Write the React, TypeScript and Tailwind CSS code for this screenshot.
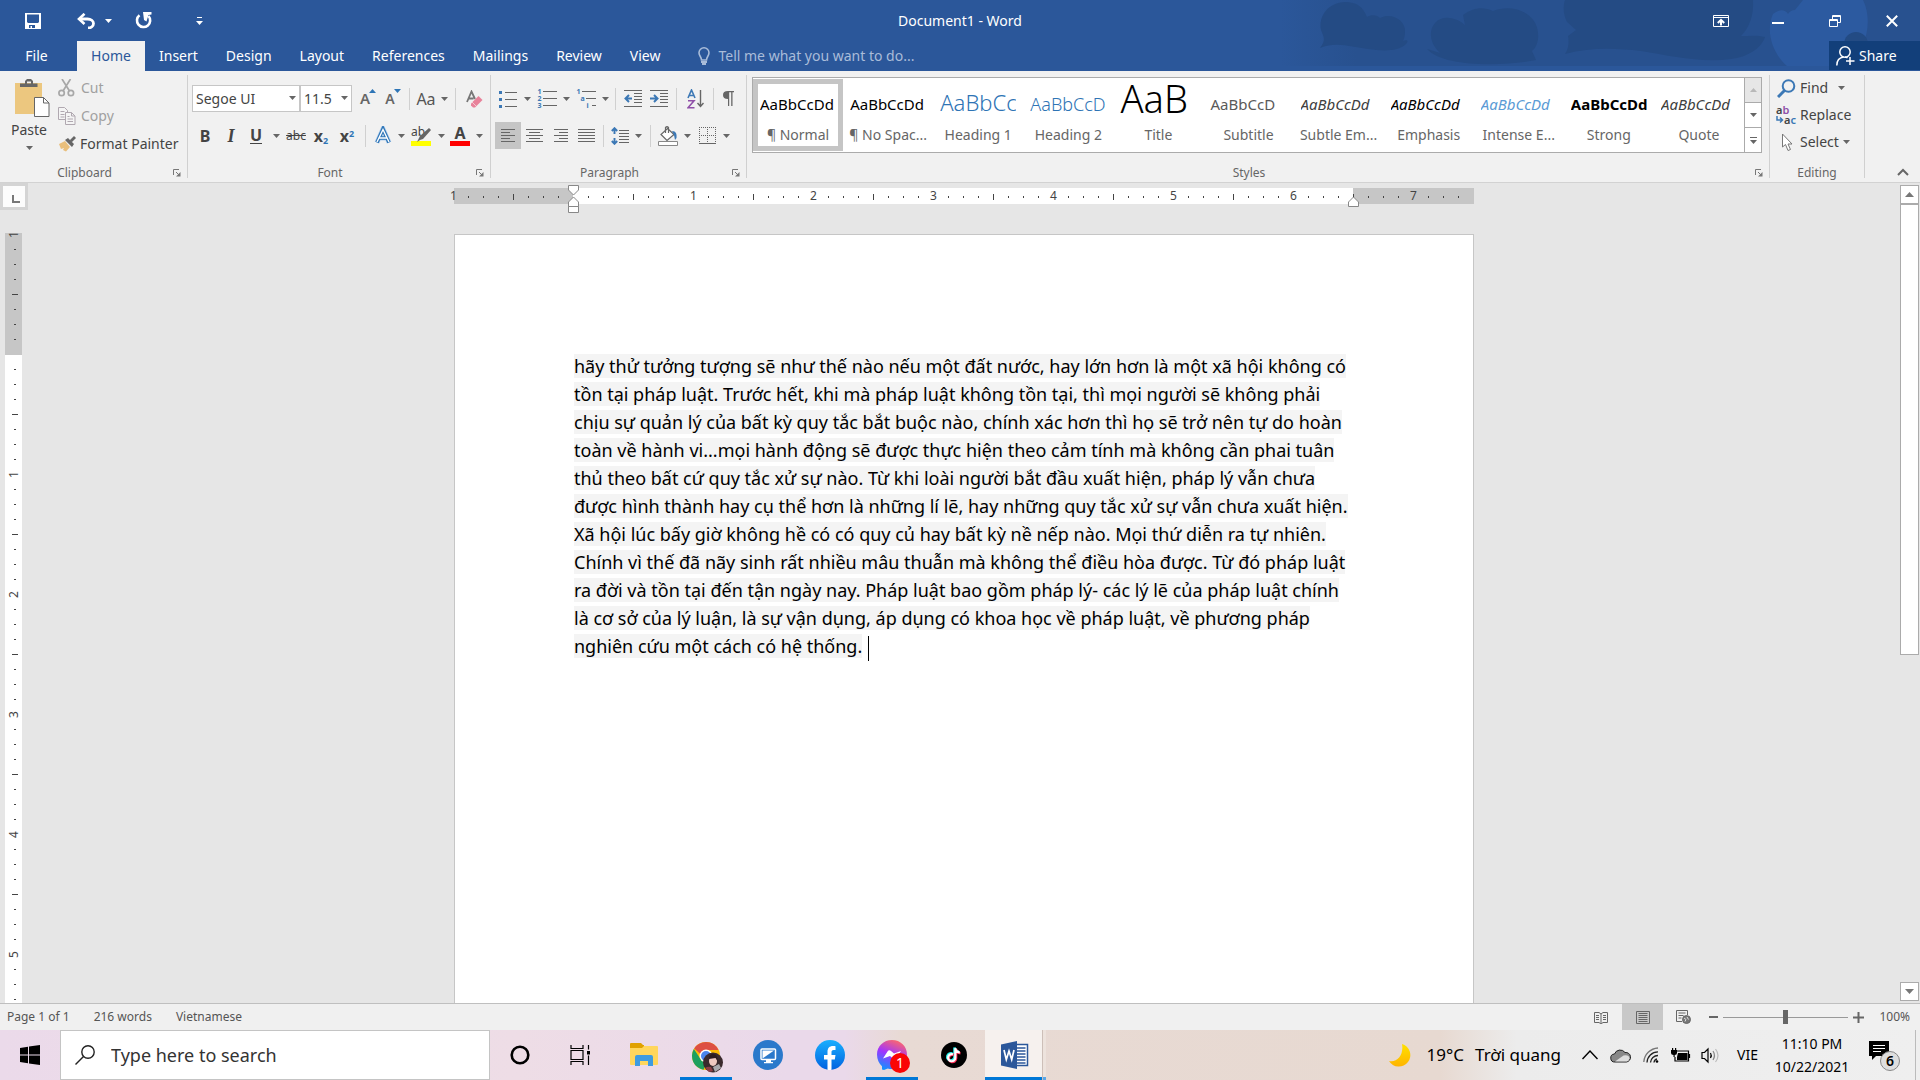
import type { ReactNode } from "react";

const LINES = [
  "hãy thử tưởng tượng sẽ như thế nào nếu một đất nước, hay lớn hơn là một xã hội không có",
  "tồn tại pháp luật. Trước hết, khi mà pháp luật không tồn tại, thì mọi người sẽ không phải",
  "chịu sự quản lý của bất kỳ quy tắc bắt buộc nào, chính xác hơn thì họ sẽ trở nên tự do hoàn",
  "toàn về hành vi...mọi hành động sẽ được thực hiện theo cảm tính mà không cần phai tuân",
  "thủ theo bất cứ quy tắc xử sự nào. Từ khi loài người bắt đầu xuất hiện, pháp lý vẫn chưa",
  "được hình thành hay cụ thể hơn là những lí lẽ, hay những quy tắc xử sự vẫn chưa xuất hiện.",
  "Xã hội lúc bấy giờ không hề có có quy củ hay bất kỳ nề nếp nào. Mọi thứ diễn ra tự nhiên.",
  "Chính vì thế đã nãy sinh rất nhiều mâu thuẫn mà không thể điều hòa được. Từ đó pháp luật",
  "ra đời và tồn tại đến tận ngày nay. Pháp luật bao gồm pháp lý- các lý lẽ của pháp luật chính",
  "là cơ sở của lý luận, là sự vận dụng, áp dụng có khoa học về pháp luật, về phương pháp",
  "nghiên cứu một cách có hệ thống.",
];

const STYLES = [
  { name: "¶ Normal", sample: "AaBbCcDd", cls: "text-[15px] leading-[22px] text-black" },
  { name: "¶ No Spac...", sample: "AaBbCcDd", cls: "text-[15px] leading-[22px] text-black" },
  { name: "Heading 1", sample: "AaBbCc", cls: "text-[22px] leading-[26px] font-light text-[#2e74b5]" },
  { name: "Heading 2", sample: "AaBbCcD", cls: "text-[18px] leading-[22px] font-light text-[#2e74b5]" },
  { name: "Title", sample: "AaB", cls: "text-[38px] leading-[34px] font-light text-black" },
  { name: "Subtitle", sample: "AaBbCcD", cls: "text-[15px] leading-[22px] text-[#5a5a5a]" },
  { name: "Subtle Em...", sample: "AaBbCcDd", cls: "text-[15px] leading-[22px] italic text-[#404040]" },
  { name: "Emphasis", sample: "AaBbCcDd", cls: "text-[15px] leading-[22px] italic text-black" },
  { name: "Intense E...", sample: "AaBbCcDd", cls: "text-[15px] leading-[22px] italic text-[#5b9bd5]" },
  { name: "Strong", sample: "AaBbCcDd", cls: "text-[15px] leading-[22px] font-bold text-black" },
  { name: "Quote", sample: "AaBbCcDd", cls: "text-[15px] leading-[22px] italic text-[#404040]" },
];

const TABS = ["Insert", "Design", "Layout", "References", "Mailings", "Review", "View"];

function Tri({ className = "" }: { className?: string }) {
  return (
    <svg width="7" height="4" viewBox="0 0 7 4" className={className} aria-hidden="true">
      <path d="M0 0h7L3.5 4z" fill="currentColor" />
    </svg>
  );
}

function Btn({ w, label, children, className = "" }: { w: string; label: string; children: ReactNode; className?: string }) {
  return (
    <button type="button" aria-label={label} className={`flex h-[27px] shrink-0 items-center justify-center ${w} ${className}`}>
      {children}
    </button>
  );
}

function Drop({ w, label }: { w: string; label: string }) {
  return (
    <Btn w={w} label={label} className="text-[#666]">
      <Tri />
    </Btn>
  );
}

function Sep({ w }: { w: string }) {
  return (
    <div className={`flex shrink-0 justify-center ${w}`}>
      <div className="h-[22px] w-px bg-[#d0d0d0]" />
    </div>
  );
}

function Launcher() {
  return (
    <button type="button" aria-label="Open dialog" className="flex h-4 w-4 items-center justify-center">
      <svg width="8" height="8" viewBox="0 0 8 8" aria-hidden="true">
        <path d="M.5 6V.5H6M3 3l3 3" fill="none" stroke="#777" />
        <path d="M7.5 3v4.500H3z" fill="#777" />
      </svg>
    </button>
  );
}

function Group({ label, width, launcher = true, children }: { label: string; width: string; launcher?: boolean; children: ReactNode }) {
  return (
    <section aria-label={label} className={`flex flex-col py-1 ${width}`}>
      <div className="flex flex-1 flex-col border-r border-[#d0d0d0]">
        <div className="flex-1">{children}</div>
        <div className="flex h-[13px] items-start">
          <div className="flex-1 text-center text-xs text-[#666]">{label}</div>
          {launcher && <div className="w-[18px]"><Launcher /></div>}
        </div>
      </div>
    </section>
  );
}

function TitleArt() {
  return (
    <svg className="pointer-events-none absolute right-0 top-0" width="640" height="66" viewBox="1280 0 640 66" aria-hidden="true">
      <defs>
        <linearGradient id="fade" x1="0" x2="1">
          <stop offset="0" stopColor="#28518f" stopOpacity="0" />
          <stop offset=".12" stopColor="#28518f" />
          <stop offset="1" stopColor="#28518f" />
        </linearGradient>
      </defs>
      <path fill="url(#fade)" d="M1280 0h640v66h-640z" />
      <g fill="#244b84">
        <path d="M1320 48c6-8 4-10 1-18-3-14 8-28 24-28 12 0 18 5 22 15 4-3 11-2 13 1 11-6 26 2 25 14 0 4-1 7-2 9 4-2 6 0 3 3-8 8-24 7-38 5-16-2-32-8-48-1z" />
        <path d="M1427 49c5 1 9 3 13 4-10-9-12-22-5-30 8-9 22-5 30 2l-2-10c12-8 20-8 30-4 20-8 44 2 45 22 1 10-3 16-6 18l4 9c-30 6-92 8-109-11z" />
        <path d="M1565 54c4-6 4-12 3-18l8-6-9-8c-4-8-4-16-2-22h188c1 16-4 28-12 36 8 0 16-1 24 1-4 12-18 20-34 22-30 4-60-3-90-8-26-3-50-4-76 3z" />
      </g>
      <path fill="#2c5aa0" d="M1773 14c6-5 12-5 15 0 2-3 4-4 7-4l8-10h60c10 20 4 50-16 66h-60c-14-12-22-34-14-52z" />
      <circle cx="1856" cy="44" r="12" fill="#234b84" />
    </svg>
  );
}

function TitleBar() {
  return (
    <div className="relative grid h-[41px] grid-cols-[1fr_auto_1fr] items-center text-white">
      <div className="flex items-center pl-[25px]">
        <button type="button" aria-label="Save">
          <svg width="16" height="16" viewBox="0 0 16 16" aria-hidden="true">
            <path fillRule="evenodd" fill="#fff" d="M0 0h16v16H0zM2 1.500v7.500l1 1h10l1-1v-7.500zM4 12v3h1.500v-2H7v2h3v-3z" />
          </svg>
        </button>
        <button type="button" aria-label="Undo" className="ml-9">
          <svg width="18" height="16" viewBox="0 0 18 16" fill="none" stroke="#fff" aria-hidden="true">
            <path strokeWidth="2.800" d="M2 6h8.500c3.500 0 6 2 6 4.500S14 15 11 15" />
            <path strokeWidth="2.600" d="M7.500.8 2 6l5.500 5" />
          </svg>
        </button>
        <button type="button" aria-label="Undo list" className="ml-[10px]"><Tri /></button>
        <button type="button" aria-label="Redo" className="ml-[23px]">
          <svg width="17" height="17" viewBox="0 0 17 17" fill="none" stroke="#fff" aria-hidden="true">
            <path strokeWidth="2.600" d="M4.500 3.200A6.600 6.600 0 1 0 13.500 4" />
            <path fill="#fff" stroke="none" d="M8 0h8.500v2.500l-3 .5-2 6.500L9 8z" />
          </svg>
        </button>
        <button type="button" aria-label="Customize toolbar" className="ml-11 flex flex-col items-center gap-[3px]">
          <span className="h-px w-[5px] bg-white" />
          <Tri />
        </button>
      </div>
      <h1 className="text-sm">Document1 - Word</h1>
      <div className="z-10 flex justify-end">
        <Btn w="w-[57px]" label="Ribbon display options">
          <svg width="16" height="12" viewBox="0 0 16 12" fill="none" stroke="#fff" aria-hidden="true">
            <path d="M.5.500h15v11H.5zM.5 2.500h15" />
            <path strokeWidth="2" d="M8 10.500V5.500M4.800 8 8 4.800 11.200 8" />
          </svg>
        </Btn>
        <Btn w="w-[57px]" label="Minimize"><span className="mt-1 h-0.5 w-3 bg-white" /></Btn>
        <Btn w="w-[57px]" label="Restore">
          <svg width="12" height="12" viewBox="0 0 12 12" fill="none" stroke="#fff" aria-hidden="true">
            <path d="M.5 4.500h8v7h-8zM.5 5.500h8M3.500 4.500v-4h8v7h-3M3.500 1.500h8" />
          </svg>
        </Btn>
        <Btn w="w-[57px]" label="Close">
          <svg width="12" height="12" viewBox="0 0 12 12" stroke="#fff" strokeWidth="2" aria-hidden="true">
            <path d="m.8.8 10.400 10.400M11.200.8.8 11.200" />
          </svg>
        </Btn>
      </div>
    </div>
  );
}

function TabBar() {
  return (
    <nav className="relative flex h-[30px] items-stretch text-sm text-white">
      <button type="button" className="w-[77px] pr-1">File</button>
      <button type="button" className="w-[68px] bg-[#f1f1f1] text-[#2b579a]">Home</button>
      {TABS.map((t) => (
        <button type="button" key={t} className="px-[14px]">{t}</button>
      ))}
      <label className="ml-6 flex items-center gap-2 text-[#a9bcd9]">
        <svg width="12" height="18" viewBox="0 0 12 18" fill="none" stroke="#a9bcd9" strokeWidth="1.600" aria-hidden="true">
          <path d="M3.500 13C3.500 10 1 9 1 5.800A5 5 0 0 1 11 5.800C11 9 8.500 10 8.500 13z" />
          <path strokeWidth="2" d="M3 15h6M4 17h4" />
        </svg>
        <input aria-label="Tell me what you want to do" placeholder="Tell me what you want to do..." className="w-[220px] bg-transparent outline-none placeholder:text-[#a9bcd9]" />
      </label>
      <button type="button" className="mb-px ml-auto flex w-[91px] items-center gap-1 bg-[#123f7a] pl-[7px]">
        <svg width="19" height="20" viewBox="0 0 19 20" fill="none" stroke="#fff" strokeWidth="1.500" aria-hidden="true">
          <circle cx="9" cy="6" r="5.200" />
          <path d="M.8 19.500c0-5 3-8 7-8.500M9 11c1 0 1.500.2 2.500.8M14 11v8M10 15h8.500" />
        </svg>
        Share
      </button>
    </nav>
  );
}

function ClipboardGroup() {
  return (
    <Group label="Clipboard" width="w-[188px]">
      <div className="flex pt-1">
        <button type="button" className="flex w-[58px] flex-col items-center text-sm leading-5 text-[#444]">
          <svg width="35" height="39" viewBox="0 0 35 39" className="mb-0.5 ml-1.5" aria-hidden="true">
            <path fill="#ecc77f" d="M0 4h27v31H0z" />
            <path fill="#666" d="M5 8V4.500h5V2l2-2h4l2 2v2.500h4.500V8zM12 2.500v2h4v-2z" fillRule="evenodd" />
            <path fill="#fff" stroke="#666" d="M19.500 18.500h9l5.500 5.500v13.500H19.500z" />
            <path fill="none" stroke="#666" d="M28.500 18.500V24H34" />
          </svg>
          Paste
          <Tri className="mt-1.5 text-[#666]" />
        </button>
        <div className="flex flex-col text-sm text-[#a0a0a0]">
          <button type="button" className="flex h-[18px] items-center gap-[6px]">
            <svg width="17" height="18" viewBox="0 0 17 18" fill="none" stroke="#a8a8a8" strokeWidth="1.700" aria-hidden="true">
              <path d="m4 0 7.500 12M12.500 0 5 12" />
              <circle cx="3.600" cy="14" r="2.700" /><circle cx="12.900" cy="14" r="2.700" />
            </svg>
            Cut
          </button>
          <button type="button" className="mt-2.5 flex h-[18px] items-center gap-[5px]">
            <svg width="18" height="18" viewBox="0 0 18 18" fill="#f4f4f4" stroke="#b0a8b0" aria-hidden="true">
              <path d="M.5.500h6l3 3v9h-9zM2.500 4.500h4M2.500 7.500h4M2.500 10h4" />
              <path d="M7.500 5.500h6l3.500 3.500v8.500H7.500zM13.500 5.500V9H17M9.500 9.500h2M9.500 12h5.500M9.500 14.500h5.500" />
            </svg>
            Copy
          </button>
          <button type="button" className="mt-2.5 flex h-[18px] items-center gap-[4px] text-[#444]">
            <svg width="18" height="16" viewBox="0 0 18 16" aria-hidden="true">
              <path fill="#e9bf7c" d="m1 8 6-3 5 6-4 4.500L5 14l1-2-3 1z" />
              <path fill="#666" d="m7 4 3-2 6 6-2 3zM12 4l4-4 2 2-4 4z" />
            </svg>
            Format Painter
          </button>
        </div>
      </div>
    </Group>
  );
}

function FontGroup() {
  return (
    <Group label="Font" width="w-[303px]">
      <div className="flex items-center pl-1 pt-2.5 text-[#555]">
        <div className="relative">
          <select aria-label="Font" className="h-[27px] w-[108px] appearance-none border border-[#c6c6c6] bg-white pl-[3px] text-sm text-[#444]">
            <option>Segoe UI</option>
          </select>
          <Tri className="pointer-events-none absolute right-1 top-[11px] text-[#666]" />
        </div>
        <div className="relative">
          <select aria-label="Font size" className="h-[27px] w-[52px] appearance-none border border-[#c6c6c6] bg-white pl-[3px] text-sm text-[#444]">
            <option>11.5</option>
          </select>
          <Tri className="pointer-events-none absolute right-1 top-[11px] text-[#666]" />
        </div>
        <Btn w="w-[26px]" label="Increase font size" className="ml-0.5">
          <span className="relative pr-1 text-[15px] font-semibold text-[#666]">A<Tri className="absolute -right-[2px] top-[2px] rotate-180 text-[#2e75b6]" /></span>
        </Btn>
        <Btn w="w-6" label="Decrease font size">
          <span className="relative pr-1 text-sm font-semibold text-[#666]">A<Tri className="absolute -right-[2px] top-0 text-[#2e75b6]" /></span>
        </Btn>
        <Sep w="w-2.5" />
        <Btn w="w-6" label="Change case"><span className="text-base">Aa</span></Btn>
        <Drop w="w-3" label="Case options" />
        <Sep w="w-2.5" />
        <Btn w="w-7" label="Clear formatting">
          <svg width="17" height="18" viewBox="0 0 17 18" aria-hidden="true">
            <path d="M1 12 5.500 1.500 9 9M2.500 8.500h5" fill="none" stroke="#777" strokeWidth="1.800" />
            <path fill="#e8829a" d="m12.500 6 4 4-7.500 7.500H7l-2-2v-2z" />
            <path stroke="#f6c6d0" d="m6 12 4 4" />
          </svg>
        </Btn>
      </div>
      <div className="flex items-center pl-1 pt-2.5 text-base text-[#444]">
        <Btn w="w-[26px]" label="Bold"><b>B</b></Btn>
        <Btn w="w-[26px]" label="Italic"><b className="font-['Liberation_Serif'] text-lg italic">I</b></Btn>
        <Btn w="w-6" label="Underline"><b className="border-b border-[#444] leading-4">U</b></Btn>
        <Drop w="w-4" label="Underline options" />
        <Btn w="w-6" label="Strikethrough"><span className="text-xs line-through">abc</span></Btn>
        <Btn w="w-[26px]" label="Subscript"><span className="font-bold">x<sub className="text-[9px] text-[#2e75b6]">2</sub></span></Btn>
        <Btn w="w-[26px]" label="Superscript"><span className="font-bold">x<sup className="text-[9px] text-[#2e75b6]">2</sup></span></Btn>
        <Sep w="w-2.5" />
        <Btn w="w-[26px]" label="Text effects">
          <svg width="18" height="20" viewBox="0 0 18 20" fill="none" aria-hidden="true">
            <path d="M3 16.500 9 3l6 13.500M5.500 12h7" stroke="#b5d1ee" strokeWidth="5" />
            <path d="M3 16.500 9 3l6 13.500M5.500 12h7" stroke="#2e75b6" strokeWidth="3.600" />
            <path d="M3 16 9 3.500l6 12.500M5.500 12h7" stroke="#fff" strokeWidth="1.400" />
          </svg>
        </Btn>
        <Drop w="w-2.5" label="Text effect options" />
        <Btn w="w-[30px]" label="Highlight">
          <span className="relative flex h-5 w-5 flex-col justify-end">
            <span className="absolute left-0 top-0 text-xs leading-3">ab</span>
            <svg className="absolute right-0 top-0.5" width="16" height="14" viewBox="0 0 16 14" aria-hidden="true">
              <path fill="#666" d="m14 0 2 2-8 9-3 1-3 2 2-4 1-2z" />
            </svg>
            <span className="h-[5px] bg-[#ffff00]" />
          </span>
        </Btn>
        <Drop w="w-2.5" label="Highlight colors" />
        <Btn w="w-7" label="Font color">
          <span className="flex h-5 w-5 flex-col items-center justify-end">
            <b className="text-base leading-4">A</b>
            <span className="h-[5px] w-5 shrink-0 bg-[#ff0000]" />
          </span>
        </Btn>
        <Drop w="w-2.5" label="Font colors" />
      </div>
    </Group>
  );
}

function Bars({ d }: { d: string }) {
  return (
    <svg width="17" height="13" viewBox="0 0 17 13" aria-hidden="true">
      <path d={d} stroke="#666" fill="none" />
    </svg>
  );
}

function ListDigits({ marks }: { marks: string[] }) {
  const stepped = marks[1] === "a";
  return (
    <span className="relative flex h-[21px] w-[19px] flex-col text-[7px] font-bold leading-[7px] text-[#3c78b5]">
      {marks.map((m, i) => (
        <span key={m} className={`flex items-center ${stepped && i === 1 ? "pl-1" : ""} ${stepped && i === 2 ? "pl-2.5" : ""}`}>
          <span className="w-[5px] text-left">{m}</span>
          <span className="h-px flex-1 bg-[#666]" />
        </span>
      ))}
    </span>
  );
}

function ParagraphGroup() {
  return (
    <Group label="Paragraph" width="w-[256px]">
      <div className="flex items-center pl-1 pt-2.5">
        <Btn w="w-[26px]" label="Bullets">
          <svg width="18" height="18" viewBox="0 0 18 18" aria-hidden="true">
            <path d="M6 2.500h12M6 9.500h12M6 16.500h12" stroke="#666" />
            <path d="M0 1h3v3H0zM0 8h3v3H0zM0 15h3v3H0z" fill="#3c78b5" />
          </svg>
        </Btn>
        <Drop w="w-3" label="Bullet options" />
        <Btn w="w-7" label="Numbering"><ListDigits marks={["1", "2", "3"]} /></Btn>
        <Drop w="w-2.5" label="Numbering options" />
        <Btn w="w-[30px]" label="Multilevel list"><ListDigits marks={["1", "a", "i"]} /></Btn>
        <Drop w="w-2" label="Multilevel options" />
        <Sep w="w-3" />
        <Btn w="w-6" label="Decrease indent">
          <svg width="18" height="17" viewBox="0 0 18 17" fill="none" aria-hidden="true">
            <path d="M0 .5h18M10 3.500h8M10 6.500h8M10 9.500h8M10 12.500h8M0 16.500h18" stroke="#666" />
            <path d="M8 8.500H2M5 5 1.500 8.500 5 12" stroke="#3c78b5" strokeWidth="2" />
          </svg>
        </Btn>
        <Btn w="w-7" label="Increase indent">
          <svg width="18" height="17" viewBox="0 0 18 17" fill="none" aria-hidden="true">
            <path d="M0 .5h18M10 3.500h8M10 6.500h8M10 9.500h8M10 12.500h8M0 16.500h18" stroke="#666" />
            <path d="M0 8.500h7M4 5l3.500 3.500L4 12" stroke="#3c78b5" strokeWidth="2" />
          </svg>
        </Btn>
        <Sep w="w-1.5" />
        <Btn w="w-8" label="Sort">
          <svg width="17" height="20" viewBox="0 0 17 20" fill="none" aria-hidden="true">
            <path d="M1 9 4.500 1 8 9M2 6.500h5" stroke="#3c78b5" strokeWidth="1.600" />
            <path d="M1 11.800h6l-6 7h6.500" stroke="#8f50a8" strokeWidth="1.600" />
            <path d="M13.500 1v16.500M10.500 14l3 3.500 3-3.500" stroke="#666" strokeWidth="1.400" />
          </svg>
        </Btn>
        <Sep w="w-1" />
        <Btn w="w-[26px]" label="Show paragraph marks">
          <svg width="12" height="15" viewBox="0 0 12 15" aria-hidden="true">
            <path d="M12 0v1.200h-1.500V15H9.200V1.200H7.200V15H6V8C2.500 8 1 6.500 1 4s1.500-4 5-4z" fill="#666" />
          </svg>
        </Btn>
      </div>
      <div className="flex items-center pl-1 pt-2.5">
        <Btn w="w-[26px]" label="Align left" className="bg-[#c5c5c5]"><Bars d="M1 .5h14M1 3.500h9M1 6.500h14M1 9.500h9M1 12.500h14" /></Btn>
        <Btn w="w-[26px]" label="Center"><Bars d="M0 .5h17M3 3.500h11M0 6.500h17M3 9.500h11M0 12.500h17" /></Btn>
        <Btn w="w-[26px]" label="Align right"><Bars d="M2 .5h14M7 3.500h9M2 6.500h14M7 9.500h9M2 12.500h14" /></Btn>
        <Btn w="w-[26px]" label="Justify"><Bars d="M0 .5h17M0 3.500h17M0 6.500h17M0 9.500h17M0 12.500h17" /></Btn>
        <Sep w="w-2" />
        <Btn w="w-[26px]" label="Line spacing">
          <svg width="18" height="18" viewBox="0 0 18 18" fill="none" aria-hidden="true">
            <path d="M8 3.500h10M8 6.500h10M8 9.500h10M8 12.500h10M8 15.500h10" stroke="#666" />
            <path d="M3.500 1v6M3.500 11v6M.8 4 3.500 1.200 6.200 4M.8 14l2.700 2.800L6.200 14" stroke="#3c78b5" strokeWidth="1.900" />
          </svg>
        </Btn>
        <Drop w="w-2.5" label="Spacing options" />
        <Sep w="w-3.5" />
        <Btn w="w-[22px]" label="Shading">
          <svg width="20" height="20" viewBox="0 0 20 20" fill="none" aria-hidden="true">
            <path d="M.5 15.500h19v4H.5z" fill="#fff" stroke="#888" />
            <path d="m9.500 2.500 6.500 6-7 6-6-6z" fill="#fff" stroke="#666" strokeWidth="1.200" />
            <path d="M7.500 7V1.500q1.500-1.500 3 0V7" stroke="#666" strokeWidth="1.200" />
            <path d="M14 5c4 0 5 3 4.500 7l-1.500 2-1-5z" fill="#3c78b5" />
          </svg>
        </Btn>
        <Drop w="w-4" label="Shading colors" />
        <Btn w="w-6" label="Borders">
          <svg width="17" height="17" viewBox="0 0 17 17" fill="none" stroke="#666" aria-hidden="true">
            <path strokeDasharray="1 1" d="M0 .5h17M.5 0v16M16.500 0v16M8.500 0v16M0 8.500h17" />
            <path d="M0 16.500h17" />
          </svg>
        </Btn>
        <Drop w="w-3.5" label="Border options" />
      </div>
    </Group>
  );
}

function StylesGroup() {
  return (
    <Group label="Styles" width="min-w-0 flex-1">
      <div className="ml-[5px] mr-[7px] mt-0.5 flex h-[76px] border border-[#ababab] bg-white">
        <div className="grid min-w-0 flex-1 grid-cols-11 py-px">
          {STYLES.map((s, i) => (
            <button
              type="button"
              key={s.name}
              className={`flex min-w-0 flex-col items-center border-[5px] ${i === 0 ? "border-[#c5c5c5]" : "border-transparent"}`}
            >
              <span className="mt-px flex h-[30px] w-[76px] shrink-0 items-end justify-start overflow-hidden">
                <span className={`whitespace-nowrap ${s.cls}`}>{s.sample}</span>
              </span>
              <span className="mt-2.5 whitespace-nowrap text-sm leading-5 text-[#666]">{s.name}</span>
            </button>
          ))}
        </div>
        <div className="flex w-[17px] flex-col divide-y divide-[#ababab] border-l border-[#ababab] text-[#666]">
          <button type="button" aria-label="Previous styles" className="flex flex-1 items-center justify-center bg-[#e6e6e6] text-[#b8b8b8]"><Tri className="rotate-180" /></button>
          <button type="button" aria-label="Next styles" className="flex flex-1 items-center justify-center"><Tri /></button>
          <button type="button" aria-label="More styles" className="flex flex-1 flex-col items-center justify-center gap-0.5"><span className="h-px w-[7px] bg-[#666]" /><Tri /></button>
        </div>
      </div>
    </Group>
  );
}

function EditingGroup() {
  return (
    <Group label="Editing" width="w-[95px]" launcher={false}>
      <div className="flex flex-col gap-px pl-[7px] text-sm text-[#444]">
        <button type="button" className="flex h-[26px] items-center gap-1">
          <svg width="19" height="19" viewBox="0 0 19 19" fill="none" stroke="#3c78b5" aria-hidden="true">
            <circle cx="11.500" cy="7" r="5.800" strokeWidth="2" />
            <path strokeWidth="3" d="M7.500 11.500 1 18" />
          </svg>
          Find
          <Tri className="ml-1.5 text-[#666]" />
        </button>
        <button type="button" className="flex h-[26px] items-center gap-1">
          <span className="-ml-px flex h-5 w-5 shrink-0 flex-col text-[11px] font-semibold leading-[10px]">
            <span className="text-left">a<span className="text-[#8f50a8]">b</span></span>
            <span className="flex items-center justify-end">
              <svg width="8" height="8" viewBox="0 0 8 8" fill="none" stroke="#3c78b5" strokeWidth="1.500" aria-hidden="true">
                <path d="M1 0v4h5M4 1.500 6.500 4 4 6.500" />
              </svg>
              a<span className="text-[#3c78b5]">c</span>
            </span>
          </span>
          Replace
        </button>
        <button type="button" className="flex h-[26px] items-center gap-1">
          <svg width="19" height="18" viewBox="0 0 19 18" fill="#fff" stroke="#777" aria-hidden="true">
            <path d="M5.500 1v13l3-2.500 2.500 6 2.500-1-2.500-5.500h4z" />
          </svg>
          Select
          <Tri className="text-[#666]" />
        </button>
      </div>
    </Group>
  );
}

const H_TICKS = Array.from({ length: 68 }, (_, i) => i);
const V_TICKS = Array.from({ length: 52 }, (_, i) => i);

function tickLabel(i: number) {
  return i % 8 === 0 && i !== 8 ? String(Math.abs(i / 8 - 1)) : "";
}

function HorizontalRuler() {
  return (
    <div className="relative mt-[5px] h-4 w-[1020px] shrink-0 bg-[linear-gradient(90deg,#c6c6c6_119px,#fff_119px,#fff_899px,#c6c6c6_899px)]">
      <div className="-ml-2 flex h-full">
        {H_TICKS.map((i) => (
          <div key={i} className="flex w-[15px] shrink-0 items-center justify-center text-xs leading-4 text-[#444]">
            {tickLabel(i) || (i === 8 ? null : <span className={i % 4 === 0 ? "mt-0.5 h-1.5 w-px bg-[#444]" : "mt-0.5 h-0.5 w-px bg-[#444]"} />)}
          </div>
        ))}
      </div>
      <svg className="absolute -top-[3px] left-[114px]" width="11" height="28" viewBox="0 0 11 28" fill="#fff" stroke="#888" aria-hidden="true">
        <path d="M.5.500h10V5l-5 5-5-5zM.5 21.500V17l5-5 5 5v4.500zM.5 21.500h10v6H.5z" />
      </svg>
      <svg className="absolute left-[894px] top-2" width="11" height="11" viewBox="0 0 11 11" fill="#fff" stroke="#888" aria-hidden="true">
        <path d="M.5 10.500V6l5-5 5 5v4.500z" />
      </svg>
    </div>
  );
}

function VerticalRuler() {
  return (
    <div className="ml-[5px] mt-4 min-h-0 w-[17px] flex-1 overflow-hidden bg-[linear-gradient(transparent_7px,#c6c6c6_7px,#c6c6c6_129px,#fff_129px)] pt-px">
      <div className="flex flex-col">
        {V_TICKS.map((i) => (
          <div key={i} className="flex h-[15px] shrink-0 items-center justify-center text-xs leading-[15px] text-[#444]">
            {tickLabel(i) ? (
              <span className="-rotate-90">{tickLabel(i)}</span>
            ) : i === 8 ? null : (
              <span className={i % 4 === 0 ? "ml-0.5 h-px w-1.5 bg-[#444]" : "ml-0.5 h-px w-0.5 bg-[#444]"} />
            )}
          </div>
        ))}
      </div>
    </div>
  );
}

function Workspace() {
  return (
    <main className="flex min-h-0 flex-1 bg-[#e6e6e6]">
      <div className="flex w-7 shrink-0 flex-col">
        <button type="button" aria-label="Tab selector" className="flex h-[27px] shrink-0 items-center justify-center border-[3px] border-[#d4d4d4] bg-[#fcfcfc] pl-1 pt-1">
          <span className="h-2 w-2 border-b-2 border-l-2 border-[#777]" />
        </button>
        <VerticalRuler />
      </div>
      <div className="flex min-w-0 flex-1 flex-col items-center overflow-hidden">
        <HorizontalRuler />
        <article className="mt-[30px] w-[1020px] flex-1 border border-b-0 border-[#c6c6c6] bg-white pl-[119px] pt-[117px]">
          <p className="text-lg leading-7 text-black">
            {LINES.map((line, i) => (
              <span key={line} className="block whitespace-nowrap">
                <span className="bg-[#f4f4f4]">{line}</span>
                {i === LINES.length - 1 && <span className="ml-1.5 inline-block h-[25px] w-px bg-black align-middle" />}
              </span>
            ))}
          </p>
        </article>
      </div>
      <div className="flex w-5 shrink-0 flex-col py-0.5 pr-px text-[#777]">
        <button type="button" aria-label="Scroll up" className="flex h-[19px] items-center justify-center border border-[#ababab] bg-white">
          <svg width="9" height="5" viewBox="0 0 9 5" aria-hidden="true"><path d="M0 5h9L4.500 0z" fill="currentColor" /></svg>
        </button>
        <div className="flex flex-1 flex-col">
          <div className="h-[58%] border border-[#ababab] bg-white" />
        </div>
        <button type="button" aria-label="Scroll down" className="flex h-[19px] items-center justify-center border border-[#ababab] bg-white">
          <svg width="9" height="5" viewBox="0 0 9 5" aria-hidden="true"><path d="M0 0h9L4.500 5z" fill="currentColor" /></svg>
        </button>
      </div>
    </main>
  );
}

function StatusBar() {
  return (
    <footer className="flex h-[27px] shrink-0 items-center border-t border-[#bfbfbf] bg-[#f0f0f0] text-xs text-[#555]">
      <span className="ml-[7px]">Page 1 of 1</span>
      <span className="ml-6">216 words</span>
      <span className="ml-6">Vietnamese</span>
      <div className="ml-auto flex h-full items-center">
        <button type="button" aria-label="Read mode" className="flex w-[42px] justify-center">
          <svg width="14" height="13" viewBox="0 0 14 13" fill="none" stroke="#666" aria-hidden="true">
            <path d="M.5 1.500H5L7 3l2-1.500h4.500v10H9L7 13l-2-1.500H.5zM7 3v9M2 4.500h3M2 6.500h3M2 8.500h3M9 4.500h3M9 6.500h3M9 8.500h3" />
          </svg>
        </button>
        <button type="button" aria-label="Print layout" className="flex h-full w-[41px] items-center justify-center bg-[#c8c8c8]">
          <svg width="14" height="13" viewBox="0 0 14 13" fill="none" stroke="#666" aria-hidden="true">
            <path d="M.5.500h13v12H.5zM2.500 2.500h9M2.500 4.500h9M2.500 6.500h9M2.500 8.500h9M2.500 10.500h9" />
          </svg>
        </button>
        <button type="button" aria-label="Web layout" className="flex w-[40px] justify-center">
          <svg width="15" height="14" viewBox="0 0 15 14" fill="none" stroke="#666" aria-hidden="true">
            <path d="M6 11.500H.5V.5h11V5M2.500 3h7M2.500 5.500h5M2.500 8h3" />
            <circle cx="10.500" cy="9.500" r="4" fill="#777" />
            <path stroke="#ddd" d="m8 8 2 1.500-1 2M11 7l1.500 2.500" />
          </svg>
        </button>
        <button type="button" aria-label="Zoom out" className="flex h-4 w-5 items-center justify-center"><span className="h-0.5 w-[9px] bg-[#666]" /></button>
        <input
          type="range"
          aria-label="Zoom"
          defaultValue="50"
          className="h-4 w-[125px] appearance-none bg-[linear-gradient(#999,#999)] bg-[length:100%_1px] bg-center bg-no-repeat [&::-webkit-slider-thumb]:h-3.5 [&::-webkit-slider-thumb]:w-[5px] [&::-webkit-slider-thumb]:appearance-none [&::-webkit-slider-thumb]:bg-[#666]"
        />
        <button type="button" aria-label="Zoom in" className="flex h-4 w-5 items-center justify-center">
          <svg width="11" height="11" viewBox="0 0 11 11" aria-hidden="true"><path d="M5.500 0v11M0 5.500h11" stroke="#666" strokeWidth="2" /></svg>
        </button>
        <span className="w-[52px] pr-2.5 text-right">100%</span>
      </div>
    </footer>
  );
}

function TaskButton({ label, running = false, children }: { label: string; running?: boolean; children: ReactNode }) {
  return (
    <button type="button" aria-label={label} className="relative flex h-full w-[62px] shrink-0 items-center justify-center">
      {children}
      {running && <span className="absolute inset-x-[5px] bottom-0 h-[3px] bg-[#0078d7]" />}
    </button>
  );
}

function TaskApps() {
  return (
    <div className="-ml-px flex h-full">
      <TaskButton label="Cortana">
        <svg width="20" height="20" viewBox="0 0 20 20" aria-hidden="true"><circle cx="10" cy="10" r="8.300" fill="none" stroke="#000" strokeWidth="2.600" /></svg>
      </TaskButton>
      <TaskButton label="Task view">
        <svg width="21" height="20" viewBox="0 0 21 20" fill="none" stroke="#000" strokeWidth="1.200" className="mr-1" aria-hidden="true">
          <path d="M1 0v3.500h12V0M1 5.500h12v9H1zM1 20v-3.500h12V20M18.500 0v4.500M18.500 10.500V20" />
          <path fill="#000" stroke="none" d="M17 6h3v3.500h-3z" />
        </svg>
      </TaskButton>
      <TaskButton label="File Explorer">
        <svg width="28" height="24" viewBox="0 0 28 24" aria-hidden="true">
          <path fill="#e0a100" d="M0 1q0-1 1-1h10l2 2h1v5H0z" />
          <path fill="#ffd65c" d="M0 5h12l2-2h13q1 0 1 1v17q0 1-1 1H1q-1 0-1-1z" />
          <path fill="#3e9be0" d="M5 23v-9q0-2 2-2h14q2 0 2 2v9h-5v-5h-8v5z" />
        </svg>
      </TaskButton>
      <TaskButton label="Google Chrome" running>
        <svg width="34" height="32" viewBox="0 0 34 32" className="ml-1 mt-1" aria-hidden="true">
          <circle cx="15" cy="15" r="14" fill="#fbbc04" />
          <path fill="#dd4f43" d="M15 1a14 14 0 0 1 12.500 8H15a6 6 0 0 0-5.500 4L3.200 7.500A14 14 0 0 1 15 1z" />
          <path fill="#1da05f" d="M2.900 8 9.500 18a6 6 0 0 0 6 3l-3 7.800A14 14 0 0 1 2.900 8z" />
          <circle cx="15" cy="15" r="6.500" fill="#fff" /><circle cx="15" cy="15" r="5" fill="#4a85ec" />
          <circle cx="22" cy="21.500" r="10" fill="#3a2a2d" />
          <ellipse cx="22" cy="20" rx="4" ry="5" fill="#efc9c0" />
          <path fill="#8e3f45" d="M14 27q3-2 6-1l2 4-4 1z" /><path fill="#a9a9ad" d="m22 26 6-3 2 4-6 4z" />
          <path fill="#2c1d20" d="M18 18q0-5 4-5 5 0 4.500 7l-2-3z" />
        </svg>
      </TaskButton>
      <TaskButton label="Remote desktop">
        <svg width="30" height="30" viewBox="0 0 30 30" aria-hidden="true">
          <circle cx="15" cy="15" r="15" fill="#2b79cb" />
          <rect x="8" y="9" width="14.500" height="10.500" rx="1" fill="none" stroke="#fff" strokeWidth="1.500" />
          <path fill="#fff" d="M9.500 10.500H21l-11.500 8zM13 20h5v2h-5zM11 22h9v1.200h-9z" />
        </svg>
      </TaskButton>
      <TaskButton label="Facebook">
        <svg width="30" height="30" viewBox="0 0 30 30" aria-hidden="true">
          <defs><linearGradient id="fb" x2="0" y2="1"><stop stopColor="#1aaffe" /><stop offset="1" stopColor="#0163e0" /></linearGradient></defs>
          <circle cx="15" cy="15" r="15" fill="url(#fb)" />
          <path fill="#fff" d="M12.500 29.800V19.500H9V15h3.500v-3c0-4 2-6 5.500-6 1.300 0 2.500.2 2.500.2V10h-2c-1.500 0-2 1-2 2v3h4l-.7 4.500h-3.300v10.300q-2 .4-4 0z" />
        </svg>
      </TaskButton>
      <TaskButton label="Messenger, 1 new" running>
        <span className="relative block h-[30px] w-[30px]">
          <svg width="30" height="30" viewBox="0 0 30 30" aria-hidden="true">
            <defs><linearGradient id="ms" x1=".7" y1="0" x2=".3" y2="1"><stop stopColor="#ff6968" /><stop offset=".5" stopColor="#a033ff" /><stop offset="1" stopColor="#1292ff" /></linearGradient></defs>
            <path fill="url(#ms)" d="M15 0c8.500 0 15 6.200 15 14.500S23.500 29 15 29c-1.500 0-3-.2-4.300-.6L7 30l-2-.5v-3.200C2 23.500 0 19.500 0 14.500 0 6.200 6.500 0 15 0z" />
            <path fill="#fff" d="m6 18.500 4.500-7q1.500-2 3.500-.5l3 2.500 7-2.500-4.500 7q-1.500 2-3.500.5l-3-2.500z" />
          </svg>
          <span className="absolute -bottom-[3px] -right-[3px] flex h-5 w-5 items-center justify-center rounded-full bg-[#fa0505] text-sm leading-5 text-white">1</span>
        </span>
      </TaskButton>
      <TaskButton label="TikTok">
        <svg width="26" height="26" viewBox="0 0 26 26" fill="none" aria-hidden="true">
          <circle cx="13" cy="13" r="13" fill="#000" />
          <g strokeWidth="2.600">
            <path stroke="#25f4ee" d="M11.300 11.500A3.600 3.600 0 1 0 13.500 15V5.500c.3 2.500 2 4 4.500 4.200" />
            <path stroke="#fe2c55" d="M12.700 13A3.600 3.600 0 1 0 15 16.500V7c.3 2.500 2 4 4.500 4.200" />
            <path stroke="#fff" strokeWidth="2.200" d="M12 12.300A3.600 3.600 0 1 0 14.300 15.700V6.200c.3 2.500 2 4 4.500 4.200" />
          </g>
        </svg>
      </TaskButton>
      <button type="button" aria-label="Word" className="relative flex h-full w-[57px] items-center justify-center bg-[#f6f1ee] pl-0.5">
        <svg width="28" height="28" viewBox="0 0 28 28" aria-hidden="true">
          <path fill="#fff" stroke="#2b579a" strokeWidth="1.500" d="M14 3.500h12.500v21H14z" />
          <path stroke="#2b579a" strokeWidth="1.300" d="M16 7h8.500M16 10h8.500M16 13h8.500M16 16h8.500M16 19h8.500M16 22h8.500" />
          <path fill="#2b579a" d="M0 3.500 16 0v28L0 24.500z" />
          <path fill="none" stroke="#fff" strokeWidth="1.700" d="m3 9 2.300 9.500L8 10l2.700 8.500L13 9" />
        </svg>
        <span className="absolute inset-x-0 bottom-0 h-[3px] bg-[#0078d7]" />
      </button>
      <div className="relative w-1 border-l border-[#cdbfb8] bg-[#ede3dd]"><span className="absolute inset-x-0 bottom-0 h-[3px] bg-[#5aa6e6]" /></div>
    </div>
  );
}

function Tray() {
  return (
    <div className="ml-auto flex h-full items-center text-black">
      <button type="button" className="flex items-center gap-[11px] text-[17px]">
        <svg width="23" height="23" viewBox="0 0 23 23" className="mr-1" aria-hidden="true">
          <defs><linearGradient id="moon" x2="0" y2="1"><stop stopColor="#ffe100" /><stop offset="1" stopColor="#ffb400" /></linearGradient></defs>
          <path fill="url(#moon)" d="M13 0a11.500 11.500 0 1 1-13 17c8 2 15-6 13-17z" />
        </svg>
        <span>19°C</span>
        <span>Trời quang</span>
      </button>
      <button type="button" aria-label="Hidden icons" className="ml-[21px]">
        <svg width="16" height="10" viewBox="0 0 16 10" fill="none" stroke="#000" strokeWidth="1.400" aria-hidden="true"><path d="m.5 9 7.500-8 7.500 8" /></svg>
      </button>
      <button type="button" aria-label="OneDrive" className="ml-3">
        <svg width="21" height="15" viewBox="0 0 21 15" aria-hidden="true">
          <path fill="#888" stroke="#222" d="M5 14a4 4 0 0 1-.5-8A6 6 0 0 1 15 4.500 4.800 4.800 0 0 1 16.500 14z" />
          <path fill="#ddd" d="m5 13.500 8.500-6q5.500-1 6 3-1 3-3 3z" />
        </svg>
      </button>
      <button type="button" aria-label="Wi-Fi" className="ml-3">
        <svg width="16" height="16" viewBox="0 0 16 16" fill="none" stroke="#222" strokeWidth="1.300" aria-hidden="true">
          <path stroke="#777" d="M.8 15A15 15 0 0 1 15 1" /><path d="M4 15.500A11 11 0 0 1 15 4.800M7.500 15.500A7.500 7.500 0 0 1 15 8.500M11 15.500a4 4 0 0 1 3-3.500" />
          <circle cx="14" cy="14.500" r="1.300" fill="#000" stroke="none" />
        </svg>
      </button>
      <button type="button" aria-label="Battery" className="ml-3">
        <svg width="20" height="14" viewBox="0 0 20 14" aria-hidden="true">
          <path fill="none" stroke="#000" strokeWidth="1.200" d="M6 3h11.500v10H4V9M18.500 6v4" />
          <path d="M7 5h9.500v7H6V9zM0 2h6v3q0 2-2.300 2v2H2.500V7Q0 7 0 5zM1 0h1.200v2H1zM4 0h1.200v2H4z" />
        </svg>
      </button>
      <button type="button" aria-label="Volume" className="ml-2.5">
        <svg width="20" height="17" viewBox="0 0 20 17" fill="none" stroke="#000" strokeWidth="1.200" aria-hidden="true">
          <path d="M1 5.500h2.500L7 2v13l-3.500-3.500H1zM9.500 6q1.500 2.500 0 5" />
          <path stroke="#888" d="M12 4q3 4.500 0 9" /><path stroke="#bbb" d="M14.500 2q5 6.500 0 13" />
        </svg>
      </button>
      <button type="button" className="ml-4 text-sm">VIE</button>
      <button type="button" className="ml-4 flex w-[76px] flex-col items-center text-sm leading-[23px]">
        <span>11:10 PM</span>
        <span>10/22/2021</span>
      </button>
      <button type="button" aria-label="Notifications" className="relative ml-[19px] h-8 w-[31px]">
        <svg className="absolute left-0 top-0.5" width="20" height="19" viewBox="0 0 20 19" aria-hidden="true">
          <path d="M0 0h20v15H7l-4 4v-4H0z" /><path stroke="#fff" strokeWidth="1.200" d="M4 4.500h12M4 7.500h12M4 10.500h8" />
        </svg>
        <span className="absolute bottom-0 right-0 flex h-5 w-5 items-center justify-center rounded-full border border-[#888] bg-[#dedede] text-sm font-semibold leading-5">6</span>
      </button>
      <div className="ml-[15px] h-full w-[5px] border-l border-[#bbb]" />
    </div>
  );
}

export default function App() {
  return (
    <div className="flex h-screen flex-col overflow-hidden bg-[#f1f1f1] font-['Noto_Sans','Open_Sans',sans-serif]">
      <header className="relative shrink-0 bg-[#2b579a]">
        <TitleArt />
        <TitleBar />
        <TabBar />
      </header>
      <div className="flex h-[112px] shrink-0 border-b border-[#d2d2d2] bg-[#f1f1f1]">
        <ClipboardGroup />
        <FontGroup />
        <ParagraphGroup />
        <StylesGroup />
        <EditingGroup />
        <div className="flex w-[55px] items-end justify-center pb-1.5 pl-5">
          <button type="button" aria-label="Collapse ribbon">
            <svg width="12" height="8" viewBox="0 0 12 8" fill="none" stroke="#666" strokeWidth="2" aria-hidden="true"><path d="m1 7 5-5 5 5" /></svg>
          </button>
        </div>
      </div>
      <Workspace />
      <StatusBar />
      <div className="flex h-[50px] shrink-0 items-center bg-[linear-gradient(90deg,#ebdaea_0%,#eedde6_27%,#ead9ea_41%,#ead9ea_44%,#e8dad4_47%,#e7d9d1_75%,#ececec_79%,#efefef_100%)]">
        <button type="button" aria-label="Start" className="flex h-full w-[60px] items-center justify-center">
          <svg width="20" height="20" viewBox="0 0 20 20" aria-hidden="true">
            <path d="M0 3 8 1.700V9.500H0zM9 1.500 20 0v9.500H9zM0 10.500h8v7.800L0 17zM9 10.500h11V20L9 18.500z" />
          </svg>
        </button>
        <label className="flex h-full w-[430px] items-center gap-4 border border-[#c4c4c4] bg-white pl-[14px]">
          <svg width="20" height="20" viewBox="0 0 20 20" fill="none" stroke="#222" strokeWidth="1.400" className="shrink-0" aria-hidden="true">
            <circle cx="13" cy="7" r="6.200" /><path d="M8.500 11.500.5 19.500" />
          </svg>
          <input type="text" aria-label="Search" placeholder="Type here to search" className="w-full bg-transparent text-lg outline-none placeholder:text-[#333]" />
        </label>
        <TaskApps />
        <Tray />
      </div>
    </div>
  );
}
